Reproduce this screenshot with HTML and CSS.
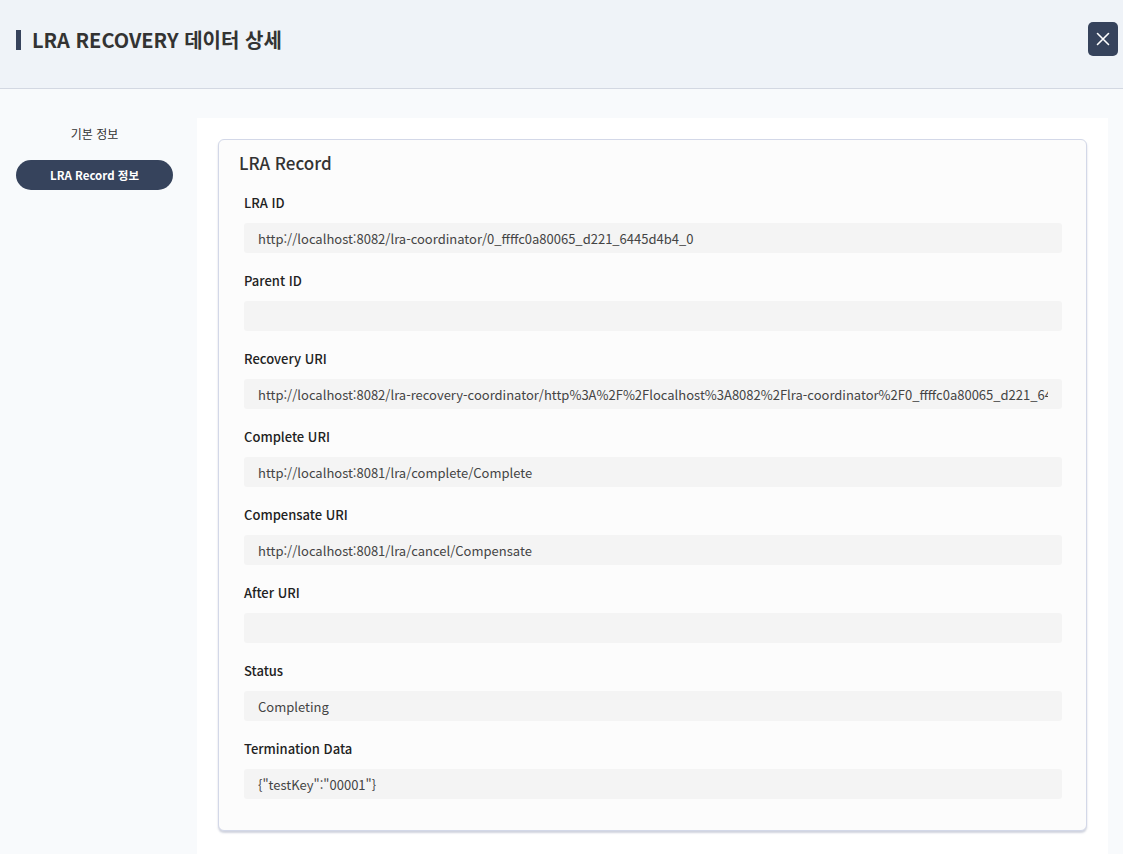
FILE: index.html
```html
<!DOCTYPE html>
<html lang="ko">
<head>
<meta charset="utf-8">
<title>LRA RECOVERY 데이터 상세</title>
<link rel="stylesheet" href="styles.css">
</head>
<body>
<header class="header">
  <h1 class="title"><span class="title-bar"></span>LRA RECOVERY 데이터 상세</h1>
  <button class="close-btn" aria-label="닫기">
    <svg width="14" height="14" viewBox="0 0 14 14"><path d="M1.5 1.5 L12.5 12.5 M12.5 1.5 L1.5 12.5" stroke="#fff" stroke-width="1.6" stroke-linecap="round" fill="none"/></svg>
  </button>
</header>
<div class="body">
  <nav class="sidebar">
    <div class="nav-item">기본 정보</div>
    <div class="nav-item active">LRA Record 정보</div>
  </nav>
  <main class="panel">
    <section class="card">
      <h2 class="card-title">LRA Record</h2>
      <div class="fields">
        <div class="field"><div class="label">LRA ID</div><div class="value"><div class="value-text">http://localhost:8082/lra-coordinator/0_ffffc0a80065_d221_6445d4b4_0</div></div></div>
        <div class="field"><div class="label">Parent ID</div><div class="value"><div class="value-text"></div></div></div>
        <div class="field"><div class="label">Recovery URI</div><div class="value"><div class="value-text">http://localhost:8082/lra-recovery-coordinator/http%3A%2F%2Flocalhost%3A8082%2Flra-coordinator%2F0_ffffc0a80065_d221_6445d4b4_0/0_ffffc0a80065_d221_6445d4b4_1</div></div></div>
        <div class="field"><div class="label">Complete URI</div><div class="value"><div class="value-text">http://localhost:8081/lra/complete/Complete</div></div></div>
        <div class="field"><div class="label">Compensate URI</div><div class="value"><div class="value-text">http://localhost:8081/lra/cancel/Compensate</div></div></div>
        <div class="field"><div class="label">After URI</div><div class="value"><div class="value-text"></div></div></div>
        <div class="field"><div class="label">Status</div><div class="value"><div class="value-text">Completing</div></div></div>
        <div class="field last"><div class="label">Termination Data</div><div class="value"><div class="value-text">{"testKey":"00001"}</div></div></div>
      </div>
    </section>
  </main>
</div>
</body>
</html>
```

FILE: styles.css
```css
* { box-sizing: border-box; }
html, body { margin: 0; padding: 0; }
body {
  font-family: "Noto Sans CJK KR", "Noto Sans", sans-serif;
  background: #f8fafc;
  color: #333;
  width: 1123px;
  height: 854px;
  overflow: hidden;
}
.header {
  height: 89px;
  background: #eff3f8;
  border-bottom: 1px solid #d3d8e2;
  display: flex;
  align-items: flex-start;
  justify-content: space-between;
  padding: 0 5px 0 16px;
}
.title {
  margin: 0;
  margin-top: 28px;
  display: flex;
  align-items: center;
  font-size: 20px;
  font-weight: 700;
  line-height: 24px;
  color: #333;
}
.title-bar {
  display: inline-block;
  width: 5px;
  height: 20px;
  background: #36435c;
  margin-right: 11px;
}
.close-btn {
  margin-top: 22px;
  width: 30px;
  height: 34px;
  border: none;
  border-radius: 5px;
  background: #36435c;
  display: flex;
  align-items: center;
  justify-content: center;
  padding: 0;
}
.body {
  display: flex;
  padding-top: 29px;
}
.sidebar {
  width: 197px;
  flex: none;
  padding: 10px 24px 0 16px;
  display: flex;
  flex-direction: column;
  gap: 13px;
}
.nav-item {
  height: 30px;
  line-height: 30px;
  text-align: center;
  font-size: 12px;
  color: #333;
  margin-top: -9px;
}
.nav-item.active {
  margin-top: -2px;
  background: #36435c;
  color: #fff;
  border-radius: 15px;
  font-size: 11.5px;
  font-weight: 700;
}
.panel {
  flex: 1;
  min-width: 0;
  margin-right: 15px;
  background: #fff;
  padding: 21px 21px 0 21px;
  height: 740px;
}
.card {
  background: #fcfcfc;
  border: 1px solid #d3d8e8;
  border-radius: 6px;
  box-shadow: 0 2px 2px rgba(120,130,160,0.35);
  padding: 11px 24px 31px 25px;
}
.card-title {
  margin: 0 0 18px -5px;
  font-size: 17px;
  font-weight: 500;
  line-height: 24px;
  color: #333;
}
.field { margin-bottom: 18px; }
.field.last { margin-bottom: 0; }
.label {
  font-size: 13px;
  font-weight: 500;
  line-height: 20px;
  color: #222;
  margin-bottom: 10px;
}
.value {
  height: 30px;
  background: #f4f4f4;
  border-radius: 3px;
  padding: 0 14px;
}
.value-text {
  height: 30px;
  line-height: 31px;
  font-size: 13px;
  color: #444;
  white-space: nowrap;
  overflow: hidden;
}
```
